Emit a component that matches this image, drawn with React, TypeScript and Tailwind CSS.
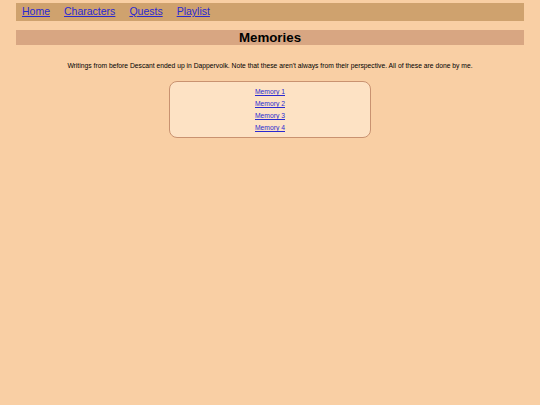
export default function App() {
  const memories = ['Memory 1', 'Memory 2', 'Memory 3', 'Memory 4']
  return (
    <div className="min-h-[405px] bg-[#f9cfa4] px-4 pt-[3px] text-black" style={{ fontFamily: '"Liberation Sans", Arial, sans-serif' }}>
      <nav className="flex h-[18px] items-center gap-[14px] bg-[#cfa26e] px-[6px] text-[10.5px]">
        {['Home', 'Characters', 'Quests', 'Playlist'].map((n) => (
          <a key={n} href="#" className="text-[#2a2ad0] underline">
            {n}
          </a>
        ))}
      </nav>
      <h1 className="mt-[9px] flex h-[15px] items-center justify-center bg-[#d8a682] text-[13.3px] font-bold">
        Memories
      </h1>
      <p className="mt-[17px] text-center text-[6.75px] leading-[8px]">
        Writings from before Descant ended up in Dappervolk. Note that these aren't always from their perspective. All of
        these are done by me.
      </p>
      <div className="mx-auto mt-[11px] flex h-[57px] w-[202px] flex-col items-center justify-center gap-[4px] rounded-[8px] border-[1.5px] border-[#c99270] bg-[#fde2c4] pt-[1px]">
        {memories.map((m) => (
          <a key={m} href="#" className="text-[6.75px] leading-[8px] text-[#2a2ad0] underline">
            {m}
          </a>
        ))}
      </div>
    </div>
  )
}
